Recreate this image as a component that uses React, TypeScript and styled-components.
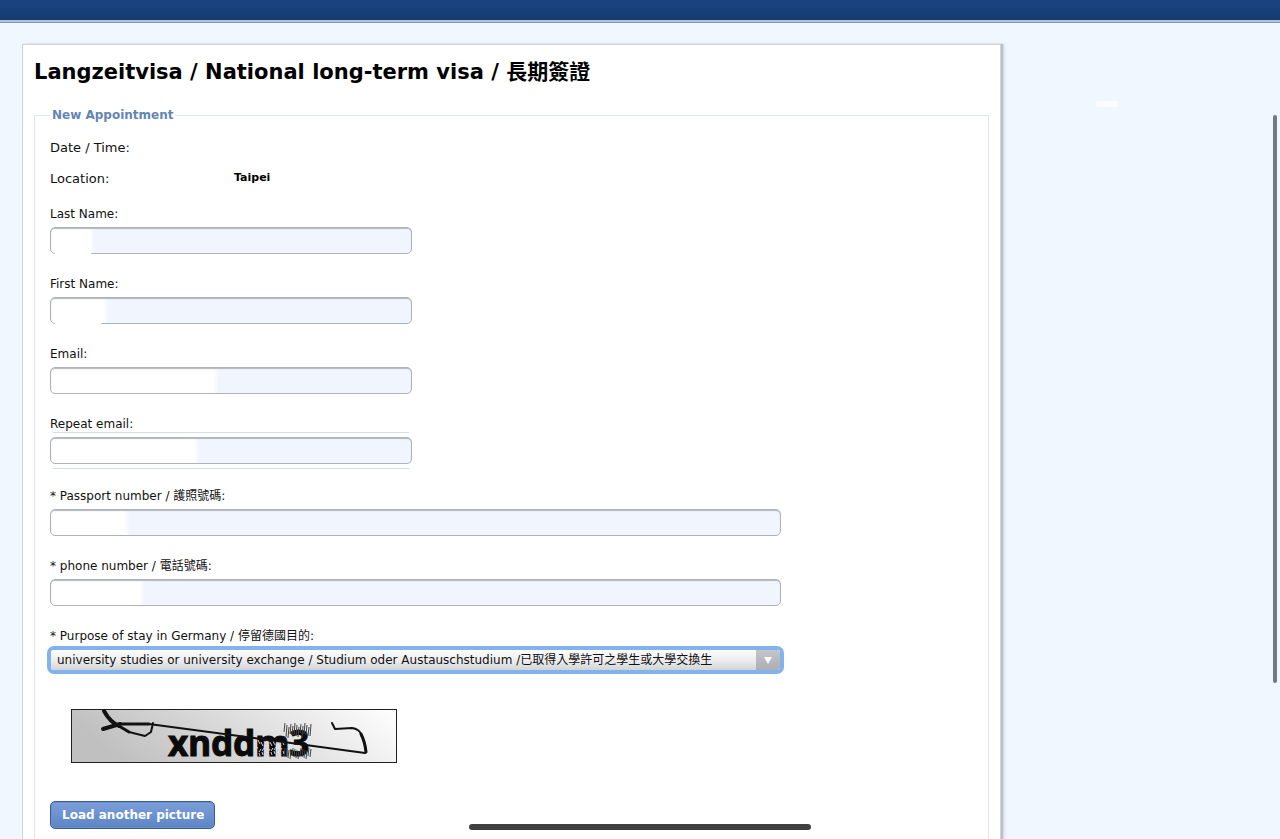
import React, { useState } from "react";
import styled, { createGlobalStyle } from "styled-components";

const GlobalStyle = createGlobalStyle`
  *, *::before, *::after { box-sizing: border-box; }
  html, body { margin: 0; padding: 0; }
  body {
    background: #f1f7ff;
    color: #111;
    font-family: "DejaVu Sans", Verdana, "Noto Sans CJK TC", sans-serif;
    font-size: 12px;
    line-height: 16px;
  }
`;

const Page = styled.div`
  display: flex;
  flex-direction: column;
  min-height: 100vh;
`;

const TopBar = styled.header`
  height: 23px;
  flex: none;
  background: linear-gradient(#19427f, #19427f 30%, #153a6c 90%, #0f2c5c);
  border-bottom: 1px solid #7c98c0;
  box-shadow: inset 0 -2px 0 #b0c2dc;
`;

const Card = styled.main`
  flex: 1;
  display: flex;
  flex-direction: column;
  margin: 21px 22px 0;
  width: calc(100% - 44px);
  max-width: 979px;
  padding: 12px 11px 0;
  background: #fff;
  border: 1px solid #cfd3dc;
  border-bottom: 0;
  box-shadow: 2px 0 1px #bdbec8, 4px 0 3px #dddfee;
`;

const Title = styled.h1`
  margin: 0;
  font-size: 21px;
  line-height: 30px;
  font-weight: bold;
  color: #000;
`;

const Group = styled.fieldset`
  flex: 1;
  min-width: 0;
  margin: 20px 0 0;
  padding: 0 15px 10px;
  border: 1px solid #dfe3ee;
  border-bottom: 0;
`;

const Legend = styled.legend`
  padding: 0 2px;
  font-size: 12px;
  line-height: 16px;
  font-weight: bold;
  color: #6485b3;
`;

const Facts = styled.dl`
  display: grid;
  grid-template-columns: 184px 1fr;
  row-gap: 15px;
  margin: 17px 0 0;
`;

const FactName = styled.dt`
  font-size: 13px;
  line-height: 16px;
`;

const FactValue = styled.dd`
  margin: 0;
  font-size: 11px;
  line-height: 14px;
  font-weight: bold;
  color: #000;
`;

const Fields = styled.div<{ $top: number }>`
  display: flex;
  flex-direction: column;
  gap: 22px;
  margin-top: ${(p) => p.$top}px;
`;

const Field = styled.div<{ $wide?: boolean }>`
  display: flex;
  flex-direction: column;
  gap: 5px;
  max-width: ${(p) => (p.$wide ? 731 : 362)}px;
`;

const Label = styled.label`
  line-height: 16px;
`;

const InputFrame = styled.div<{ $lined?: boolean; $wiped?: number }>`
  display: flex;
  position: relative;

  &::before {
    content: "";
    display: ${(p) => (p.$lined ? "block" : "none")};
    position: absolute;
    inset: -5px 3px;
    border: solid #d3dfe2;
    border-width: 1px 0;
    pointer-events: none;
  }

  &::after {
    content: "";
    display: ${(p) => (p.$wiped ? "block" : "none")};
    position: absolute;
    top: 5px;
    bottom: 0;
    left: 5px;
    width: ${(p) => (p.$wiped ?? 0)}px;
    background: #fff;
    box-shadow: 0 0 2px #fff;
    pointer-events: none;
  }
`;

const TextInput = styled.input<{ $blank: number }>`
  width: 100%;
  height: 27px;
  padding: 0 8px;
  font: inherit;
  border: 1px solid #afb2ba;
  border-radius: 5px;
  background: linear-gradient(90deg, #fff ${(p) => p.$blank - 4}px, #f1f5fe ${(p) => p.$blank + 2}px);
  box-shadow: inset 0 1px 1px #b4b6be;
  outline: 0;
`;

const SelectFrame = styled.div`
  display: flex;
  position: relative;
  margin: 1px;
  border-radius: 3px;
  box-shadow: 0 0 0 4px #81b4ec;
`;

const Select = styled.select`
  appearance: none;
  width: 100%;
  height: 20px;
  padding: 0 32px 0 6px;
  font: inherit;
  color: #111;
  border: 0;
  border-radius: 3px;
  background: linear-gradient(#fdfdfd, #ececed 55%, #d2d4d7);
  outline: 0;
`;

const SelectArrow = styled.span`
  position: absolute;
  inset: 0 0 0 auto;
  display: flex;
  align-items: center;
  justify-content: center;
  width: 24px;
  border-radius: 0 3px 3px 0;
  background: linear-gradient(#c4c5c9, #acaeb3);
  pointer-events: none;
`;

const Captcha = styled.svg`
  display: block;
  margin: 38px 0 0 21px;
  overflow: visible;
`;

const Button = styled.button`
  display: block;
  height: 28px;
  margin-top: 38px;
  padding: 0 10px 0 11px;
  font: inherit;
  font-weight: bold;
  color: #fff;
  border: 1px solid #3c5a8c;
  border-radius: 5px;
  background: linear-gradient(#7c9fdb, #5c84c4);
  box-shadow: inset 0 0 0 1px #6b91cd;
`;

const Smudge = styled.div`
  position: absolute;
  top: 101px;
  left: 1096px;
  width: 22px;
  height: 6px;
  border-radius: 2px;
  background: #fafcff;
`;

const ScrollThumb = styled.div`
  position: fixed;
  top: 115px;
  right: 3px;
  width: 4px;
  height: 568px;
  border-radius: 2px;
  background: #75787c;
`;

const HomeIndicator = styled.div`
  position: fixed;
  bottom: 9px;
  left: 50%;
  width: 342px;
  height: 6px;
  margin-left: -171px;
  border-radius: 3px;
  background: #404041;
`;

const contact = [
  { id: "lastname", label: "Last Name:", blank: 42, wiped: 36 },
  { id: "firstname", label: "First Name:", blank: 56, wiped: 46 },
  { id: "email", label: "Email:", blank: 166 },
  { id: "email2", label: "Repeat email:", blank: 147, lined: true },
];

const details = [
  { id: "passport", label: "* Passport number / 護照號碼:", blank: 77 },
  { id: "phone", label: "* phone number / 電話號碼:", blank: 92 },
];

const purpose =
  "university studies or university exchange / Studium oder Austauschstudium /已取得入學許可之學生或大學交換生";

export default function App() {
  const [choice, setChoice] = useState(purpose);
  return (
    <Page>
      <GlobalStyle />
      <TopBar />
      <Card>
        <Title>Langzeitvisa / National long-term visa / 長期簽證</Title>
        <Group>
          <Legend>New Appointment</Legend>
          <Facts>
            <FactName>Date / Time:</FactName>
            <FactValue />
            <FactName>Location:</FactName>
            <FactValue>Taipei</FactValue>
          </Facts>
          <Fields $top={19}>
            {contact.map((f) => (
              <Field key={f.id}>
                <Label htmlFor={f.id}>{f.label}</Label>
                <InputFrame $lined={f.lined} $wiped={f.wiped}>
                  <TextInput id={f.id} type="text" $blank={f.blank} />
                </InputFrame>
              </Field>
            ))}
          </Fields>
          <Fields $top={24}>
            {details.map((f) => (
              <Field key={f.id} $wide>
                <Label htmlFor={f.id}>{f.label}</Label>
                <InputFrame>
                  <TextInput id={f.id} type="text" $blank={f.blank} />
                </InputFrame>
              </Field>
            ))}
            <Field $wide>
              <Label htmlFor="purpose">* Purpose of stay in Germany / 停留德國目的:</Label>
              <SelectFrame>
                <Select id="purpose" value={choice} onChange={(e) => setChoice(e.target.value)}>
                  <option>{purpose}</option>
                </Select>
                <SelectArrow>
                  <svg width="8" height="7" viewBox="0 0 8 7" aria-hidden="true">
                    <path d="M0 0h8L4 7z" fill="#fff" />
                  </svg>
                </SelectArrow>
              </SelectFrame>
            </Field>
          </Fields>
          <CaptchaPicture />
          <Button type="button">Load another picture</Button>
        </Group>
      </Card>
      <Smudge />
      <ScrollThumb />
      <HomeIndicator />
    </Page>
  );
}

/* Uneven bristles that fray the last letters of the captcha. */
const bristles = Array.from({ length: 14 }, (_, i) => {
  const x = 214 + i * 2;
  const top = 14 + ((i * 7) % 5);
  return `M${x} ${top}l-1 ${9 + ((i * 3) % 4)}M${x} ${39 + ((i * 5) % 4)}l-1 8`;
}).join("");

/* Pale scratches that break up the m. */
const scratches = Array.from({ length: 9 }, (_, i) => {
  const x = 187 + i * 3;
  return `M${x} ${31 + ((i * 5) % 3)}l2 4M${x} ${38 + ((i * 2) % 3)}l-2 3M${x + 1} ${44 - ((i * 4) % 3)}l1 3`;
}).join("");

function CaptchaPicture() {
  return (
    <Captcha width="326" height="54" viewBox="0 0 326 54" role="img" aria-label="Captcha">
      <defs>
        <linearGradient id="shade" x1="0" y1="0.2" x2="1" y2="0">
          <stop offset="0" stopColor="#c0c0c0" />
          <stop offset="0.5" stopColor="#dedede" />
          <stop offset="1" stopColor="#fff" />
        </linearGradient>
      </defs>
      <rect x="0.5" y="0.5" width="325" height="53" fill="url(#shade)" stroke="#222" />
      <text
        x="97"
        y="47"
        fontFamily="Noto Sans"
        fontWeight="bold"
        fontSize="35"
        fill="#0a0a0a"
        stroke="#0a0a0a"
        strokeWidth="1"
      >
        xnddm3
      </text>
      <path d={scratches} stroke="#ccc" strokeWidth="1" fill="none" />
      <path d={bristles} stroke="#444" strokeWidth="1" fill="none" />
      <g fill="none" stroke="#111" strokeLinecap="round" strokeLinejoin="round">
        <path d="M33 2Q39 13 48 17" strokeWidth="4" />
        <path d="M48 17L58 23" strokeWidth="3" />
        <path d="M32 20L49 15" strokeWidth="4" />
        <path d="M49 15H78" strokeWidth="3" />
        <path d="M58 23L74 27L80 23L82 14" strokeWidth="2" />
        <path d="M78 15L294 44" strokeWidth="2" />
        <path d="M261 14L264 20L281 19Q288 20 290 25" strokeWidth="2" />
        <path d="M290 25Q294 33 295 43" strokeWidth="3" />
      </g>
    </Captcha>
  );
}
